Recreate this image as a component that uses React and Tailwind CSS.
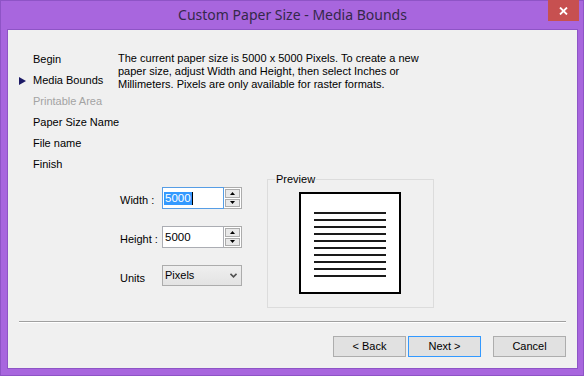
import React from "react";

function Arrow() {
  return (
    <svg width="7" height="8" viewBox="0 0 7 8">
      <polygon points="0,0 7,4 0,8" fill="#1c1a66" />
    </svg>
  );
}

function Tri({ up }) {
  return (
    <svg width="5" height="3" viewBox="0 0 5 3">
      {up ? <polygon points="0,3 5,3 2.5,0" fill="#000" /> : <polygon points="0,0 5,0 2.5,3" fill="#000" />}
    </svg>
  );
}

function Spinner() {
  return (
    <div className="w-[18px] h-[22px] border border-l-0 border-[#acacac] bg-white flex flex-col p-[1px] gap-[1px]">
      <div className="flex-1 border border-[#acacac] bg-[#e8e8e8] flex items-center justify-center">
        <Tri up />
      </div>
      <div className="flex-1 border border-[#acacac] bg-[#e8e8e8] flex items-center justify-center">
        <Tri />
      </div>
    </div>
  );
}

function Btn({ children, focus }) {
  return (
    <div
      className={
        "w-[73px] h-[21px] border bg-[#e1e1e1] flex items-center justify-center leading-[13px] " +
        (focus ? "border-[#3399ff]" : "border-[#adadad]")
      }
    >
      {children}
    </div>
  );
}

export default function App() {
  const nav = [
    { t: "Begin" },
    { t: "Media Bounds", cur: true },
    { t: "Printable Area", dis: true },
    { t: "Paper Size Name" },
    { t: "File name" },
    { t: "Finish" },
  ];
  return (
    <div className="w-[584px] h-[376px] bg-[#a866de] border border-[#8e54c6] flex flex-col pl-[6px] pr-[5px] pb-[6px] font-['Liberation_Sans',Arial,sans-serif] text-[11px] text-black">
      <div className="h-[28px] relative flex items-center justify-center">
        <span className="font-['Noto_Sans',sans-serif] text-[14px] text-[#34284a] leading-[20px] pb-[1px] whitespace-nowrap">
          Custom Paper Size - Media Bounds
        </span>
        <div className="absolute top-[-1px] right-[-1px] w-[31px] h-[21px] bg-[#c75050] flex items-center justify-center">
          <svg width="9" height="8" viewBox="0 0 9 8">
            <path d="M1 0.5 L8 7.5 M8 0.5 L1 7.5" stroke="#fff" strokeWidth="1.8" />
          </svg>
        </div>
      </div>
      <div className="flex-1 border border-[#8e54c6] bg-[#f0f0f0] flex flex-col">
        <div className="h-[291px] flex">
          <div className="w-[110px] shrink-0 pl-[11px] pt-[19px] flex flex-col">
            {nav.map((n) => (
              <div key={n.t} className="h-[21px] flex items-center whitespace-nowrap">
                <div className="w-[14px] shrink-0 flex items-center">{n.cur ? <Arrow /> : null}</div>
                <span className={"leading-[21px] " + (n.dis ? "text-[#a3a3a3]" : "text-black")}>{n.t}</span>
              </div>
            ))}
          </div>
          <div className="flex flex-col pt-[22px]">
            <div className="leading-[13px] text-black whitespace-nowrap">
              The current paper size is 5000 x 5000 Pixels. To create a new
              <br />
              paper size, adjust Width and Height, then select Inches or
              <br />
              Millimeters. Pixels are only available for raster formats.
            </div>
            <div className="flex mt-[88px]">
              <div className="w-[149px] pl-[2px] pt-[8px] flex flex-col">
                <div className="flex h-[22px]">
                  <div className="w-[42px] leading-[22px] pt-[2px] whitespace-nowrap">Width :</div>
                  <div className="w-[62px] h-[22px] border border-[#569de5] bg-white flex items-center pl-[1px]">
                    <span className="bg-[#3399ff] text-white text-[11.5px] leading-[13px] px-[1px]">5000</span>
                    <span className="w-[1px] h-[13px] bg-black" />
                  </div>
                  <Spinner />
                </div>
                <div className="flex h-[22px] mt-[17px]">
                  <div className="w-[42px] leading-[22px] pt-[2px] whitespace-nowrap">Height :</div>
                  <div className="w-[62px] h-[22px] border border-[#abadb3] bg-white flex items-center pl-[2px]">
                    <span className="text-[11.5px] leading-[13px]">5000</span>
                  </div>
                  <Spinner />
                </div>
                <div className="flex h-[21px] mt-[17px]">
                  <div className="w-[42px] leading-[21px] pt-[3px]">Units</div>
                  <div className="w-[80px] h-[21px] border border-[#acacac] bg-gradient-to-b from-[#efefef] to-[#e3e3e3] flex items-center justify-between pl-[2px] pr-[4px]">
                    <span className="leading-[13px]">Pixels</span>
                    <svg width="7" height="5" viewBox="0 0 7 5">
                      <path d="M0.5 0.8 L3.5 3.8 L6.5 0.8" stroke="#505050" strokeWidth="1.6" fill="none" />
                    </svg>
                  </div>
                </div>
              </div>
              <div className="w-[167px] h-[129px] border border-[#dcdcdc] relative">
                <span className="absolute left-[7px] top-[-6px] px-[1px] bg-[#f0f0f0] leading-[11px]">Preview</span>
                <div className="ml-[31px] mt-[12px] w-[102px] h-[102px] border-2 border-black bg-white flex flex-col pt-[18px] pl-[13px] gap-[5px]">
                  {[0, 1, 2, 3, 4, 5, 6, 7, 8, 9].map((i) => (
                    <div key={i} className="w-[72px] h-[2px] bg-[#1a1a1a]" />
                  ))}
                </div>
              </div>
            </div>
          </div>
        </div>
        <div className="mx-[11px] h-[2px] border-t border-b border-t-[#a0a0a0] border-b-white" />
        <div className="flex justify-end pr-[11px] mt-[13px]">
          <Btn>&lt; Back</Btn>
          <div className="w-[2px]" />
          <Btn focus>Next &gt;</Btn>
          <div className="w-[12px]" />
          <Btn>Cancel</Btn>
        </div>
      </div>
    </div>
  );
}
